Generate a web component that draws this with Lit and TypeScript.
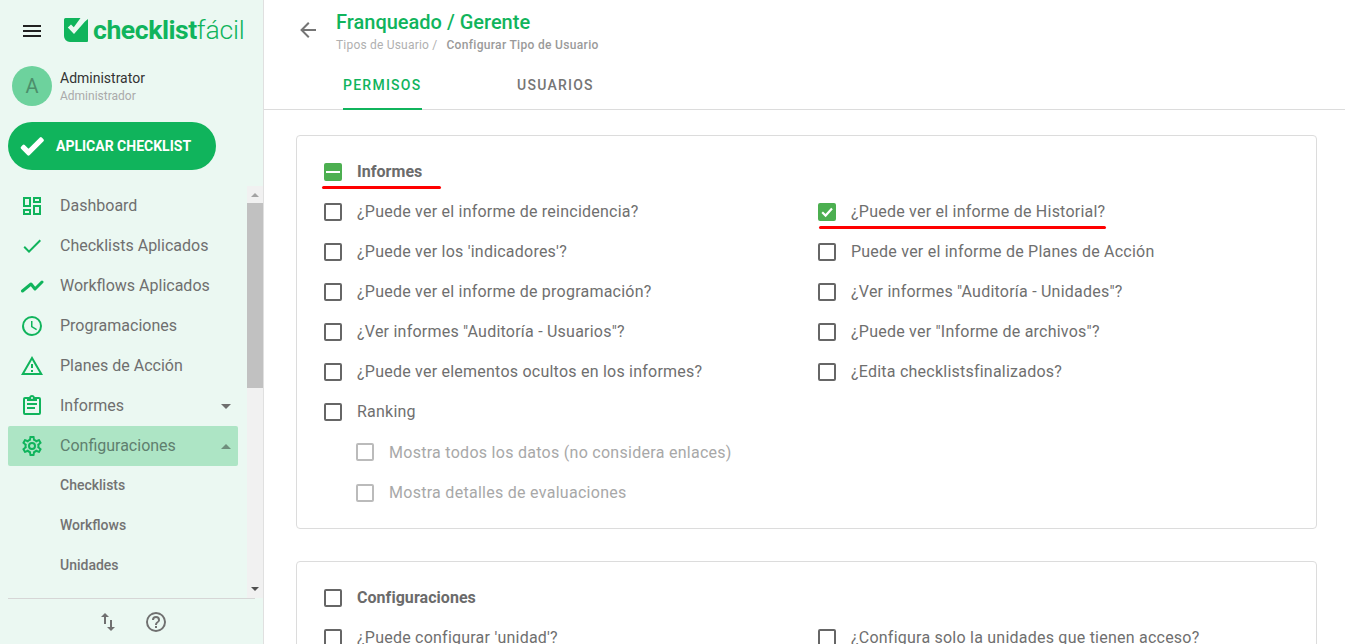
import { LitElement, html, css, svg } from "lit";
import { customElement } from "lit/decorators.js";

const icons: Record<string, string> = {
  dashboard: "M19,5V7H15V5H19M9,5V11H5V5H9M19,13V19H15V13H19M9,17V19H5V17H9M21,3H13V9H21V3M11,3H3V13H11V3M21,11H13V21H21V11M11,15H3V21H11V15Z",
  check: "M21,7L9,19L3.5,13.5L4.91,12.09L9,16.17L19.59,5.59L21,7Z",
  clock: "M12,20A8,8 0 0,0 20,12A8,8 0 0,0 12,4A8,8 0 0,0 4,12A8,8 0 0,0 12,20M12,2A10,10 0 0,1 22,12A10,10 0 0,1 12,22C6.47,22 2,17.5 2,12A10,10 0 0,1 12,2M12.5,7V12.25L17,14.92L16.25,16.15L11,13V7H12.5Z",
  alert: "M12,2L1,21H23M12,6L19.53,19H4.47M11,10V14H13V10M11,16V18H13V16",
  report: "M19,3H14.82C14.4,1.84 13.3,1 12,1C10.7,1 9.6,1.84 9.18,3H5A2,2 0 0,0 3,5V19A2,2 0 0,0 5,21H19A2,2 0 0,0 21,19V5A2,2 0 0,0 19,3M12,3A1,1 0 0,1 13,4A1,1 0 0,1 12,5A1,1 0 0,1 11,4A1,1 0 0,1 12,3M7,7H17V5H19V19H5V5H7V7M17,11H7V9H17V11M15,15H7V13H15V15Z",
  cog: "M12,8A4,4 0 0,1 16,12A4,4 0 0,1 12,16A4,4 0 0,1 8,12A4,4 0 0,1 12,8M12,10A2,2 0 0,0 10,12A2,2 0 0,0 12,14A2,2 0 0,0 14,12A2,2 0 0,0 12,10M10,22C9.75,22 9.54,21.82 9.5,21.58L9.13,18.93C8.5,18.68 7.96,18.34 7.44,17.94L4.95,18.95C4.73,19.03 4.46,18.95 4.34,18.73L2.34,15.27C2.21,15.05 2.27,14.78 2.46,14.63L4.57,12.97L4.5,12L4.57,11L2.46,9.37C2.27,9.22 2.21,8.95 2.34,8.73L4.34,5.27C4.46,5.05 4.73,4.96 4.95,5.05L7.44,6.05C7.96,5.66 8.5,5.32 9.13,5.07L9.5,2.42C9.54,2.18 9.75,2 10,2H14C14.25,2 14.46,2.18 14.5,2.42L14.87,5.07C15.5,5.32 16.04,5.66 16.56,6.05L19.05,5.05C19.27,4.96 19.54,5.05 19.66,5.27L21.66,8.73C21.79,8.95 21.73,9.22 21.54,9.37L19.43,11L19.5,12L19.43,13L21.54,14.63C21.73,14.78 21.79,15.05 21.66,15.27L19.66,18.73C19.54,18.95 19.27,19.04 19.05,18.95L16.56,17.95C16.04,18.34 15.5,18.68 14.87,18.93L14.5,21.58C14.46,21.82 14.25,22 14,22H10M11.25,4L10.88,6.61C9.68,6.86 8.62,7.5 7.85,8.39L5.44,7.35L4.69,8.65L6.8,10.2C6.4,11.37 6.4,12.64 6.8,13.8L4.68,15.36L5.43,16.66L7.86,15.62C8.63,16.5 9.68,17.14 10.87,17.38L11.24,20H12.76L13.13,17.39C14.32,17.14 15.37,16.5 16.14,15.62L18.57,16.66L19.32,15.36L17.2,13.81C17.6,12.64 17.6,11.37 17.2,10.2L19.31,8.65L18.56,7.35L16.15,8.39C15.38,7.5 14.32,6.86 13.12,6.62L12.75,4H11.25Z",
  help: "M11,18H13V16H11V18M12,2A10,10 0 0,0 2,12A10,10 0 0,0 12,22A10,10 0 0,0 22,12A10,10 0 0,0 12,2M12,20C7.59,20 4,16.41 4,12C4,7.59 7.59,4 12,4C16.41,4 20,7.59 20,12C20,16.41 16.41,20 12,20M12,6A4,4 0 0,0 8,10H10A2,2 0 0,1 12,8A2,2 0 0,1 14,10C14,12 11,11.75 11,15H13C13,12.75 16,12.5 16,10A4,4 0 0,0 12,6Z",
  swap: "M9,3L5,7H8V14H10V7H13M16,17V10H14V17H11L15,21L19,17H16Z",
  back: "M20,11V13H8L13.5,18.5L12.08,19.92L4.16,12L12.08,4.08L13.5,5.5L8,11H20Z",
  menu: "M3,6H21V8H3V6M3,11H21V13H3V11M3,16H21V18H3V16Z",
  trend: "M2.5 17 L11 10 L15 15 L22 8",
};

function icon(name: string, cls = "") {
  return html`<svg class="ic ${cls}" viewBox="0 0 24 24">${svg`<path d=${icons[name]}></path>`}</svg>`;
}

const navItems = [
  { label: "Dashboard", ic: "dashboard" },
  { label: "Checklists Aplicados", ic: "check" },
  { label: "Workflows Aplicados", ic: "trend" },
  { label: "Programaciones", ic: "clock" },
  { label: "Planes de Acción", ic: "alert" },
  { label: "Informes", ic: "report", caret: "down" },
  { label: "Configuraciones", ic: "cog", caret: "up", active: true },
];

const subItems = ["Checklists", "Workflows", "Unidades"];

const leftCol = [
  "¿Puede ver el informe de reincidencia?",
  "¿Puede ver los 'indicadores'?",
  "¿Puede ver el informe de programación?",
  '¿Ver informes "Auditoría - Usuarios"?',
  "¿Puede ver elementos ocultos en los informes?",
  "Ranking",
];

const rightCol = [
  "¿Puede ver el informe de Historial?",
  "Puede ver el informe de Planes de Acción",
  '¿Ver informes "Auditoría - Unidades"?',
  '¿Puede ver "Informe de archivos"?',
  "¿Edita checklistsfinalizados?",
];

@customElement("app-root")
export class AppRoot extends LitElement {
  static styles = css`
    :host {
      display: flex;
      width: 1345px;
      height: 644px;
      overflow: hidden;
      background: #fff;
      font-family: Roboto, "Liberation Sans", sans-serif;
      color: #6f6f6f;
    }
    .ic {
      width: 24px;
      height: 24px;
      fill: currentColor;
      flex: none;
      display: block;
    }
    .ic.line {
      fill: none;
      stroke: currentColor;
      stroke-width: 3px;
      stroke-linecap: round;
      stroke-linejoin: round;
    }

    /* sidebar */
    .sidebar {
      width: 264px;
      height: 644px;
      flex: none;
      box-sizing: border-box;
      border-right: 1px solid #e0e0e0;
      background: #ebf8f2;
      display: flex;
      flex-direction: column;
    }
    .brand {
      height: 60px;
      display: flex;
      align-items: center;
      padding-left: 20px;
      flex: none;
    }
    .burger {
      color: #212121;
      margin-right: 20px;
      position: relative;
      top: 1px;
    }
    .logo-mark {
      width: 24px;
      height: 24px;
      flex: none;
      margin-right: 5px;
    }
    .logo-text {
      font-size: 26.6px;
      line-height: 32px;
      color: #10b45c;
      font-weight: 700;
      letter-spacing: -0.45px;
      white-space: nowrap;
    }
    .logo-text span {
      font-weight: 300;
      letter-spacing: -0.2px;
    }
    .user {
      display: flex;
      align-items: center;
      gap: 8px;
      height: 40px;
      margin: 6px 0 0 12px;
      flex: none;
    }
    .avatar {
      width: 40px;
      height: 40px;
      border-radius: 50%;
      background: #6dd29d;
      color: #4c8f6b;
      font-size: 20px;
      display: flex;
      align-items: center;
      justify-content: center;
    }
    .user-info {
      padding-top: 2px;
    }
    .user-name {
      font-size: 14px;
      line-height: 18px;
      color: #333;
    }
    .user-role {
      font-size: 12px;
      line-height: 19px;
      color: #aaa;
    }
    .apply {
      width: 208px;
      height: 48px;
      margin: 16px 0 16px 8px;
      border-radius: 24px;
      background: #10b45c;
      color: #fff;
      display: flex;
      align-items: center;
      font-size: 14px;
      font-weight: 700;
      flex: none;
      box-sizing: border-box;
      padding-left: 10px;
    }
    .apply .ic {
      width: 28px;
      height: 28px;
      margin-right: 10px;
      stroke: #fff;
      stroke-width: 2.4px;
      stroke-linejoin: round;
    }
    .nav-wrap {
      flex: 1;
      min-height: 0;
      display: flex;
    }
    .nav {
      flex: 1;
      min-width: 0;
      overflow: hidden;
      padding-left: 8px;
    }
    .nav-item {
      width: 230px;
      height: 40px;
      display: flex;
      align-items: center;
      box-sizing: border-box;
      padding: 0 7px 0 12px;
      font-size: 16px;
      border-radius: 2px;
    }
    .nav-item .ic {
      color: #10b45c;
      margin-right: 16px;
    }
    .nav-item.active {
      background: #ade5c5;
    }
    .label {
      padding-bottom: 2px;
    }
    .caret {
      margin-left: auto;
      border-left: 5px solid transparent;
      border-right: 5px solid transparent;
    }
    .caret.down {
      border-top: 5px solid #6f6f6f;
    }
    .caret.up {
      border-bottom: 5px solid #6f8f7d;
    }
    .active .label {
      color: #5f7f6e;
    }
    .sub-item {
      height: 40px;
      display: flex;
      align-items: center;
      box-sizing: border-box;
      padding: 0 0 2px 52px;
      font-size: 14px;
      font-weight: 500;
      color: #737373;
    }
    .track {
      width: 16px;
      flex: none;
      background: #f1f1f1;
      display: flex;
      flex-direction: column;
      align-items: center;
      margin-left: 1px;
    }
    .thumb {
      width: 100%;
      height: 185px;
      background: #c1c1c1;
      margin-top: 1px;
    }
    .arrow-up {
      margin-top: 7px;
      height: 0;
      border-left: 4px solid transparent;
      border-right: 4px solid transparent;
      border-bottom: 4px solid #a3a3a3;
      margin-bottom: 5px;
    }
    .arrow-down {
      margin-top: auto;
      margin-bottom: 7px;
      height: 0;
      border-left: 4px solid transparent;
      border-right: 4px solid transparent;
      border-top: 4px solid #505050;
    }
    .side-foot {
      height: 46px;
      width: 247px;
      flex: none;
      margin-left: 8px;
      box-sizing: border-box;
      border-top: 1px solid #d6d6d6;
      display: flex;
      align-items: center;
      justify-content: center;
      gap: 24px;
      color: #707070;
    }

    /* main */
    .main {
      flex: 1;
      min-width: 0;
      display: flex;
      flex-direction: column;
    }
    .topbar {
      height: 60px;
      flex: none;
      display: flex;
      align-items: flex-start;
      padding-left: 32px;
      box-sizing: border-box;
    }
    .back {
      color: #757575;
      margin: 18px 16px 0 0;
    }
    .title {
      margin-top: 9px;
      font-size: 20px;
      line-height: 26px;
      font-weight: 500;
      color: #10b45c;
    }
    .crumbs {
      display: flex;
      font-size: 12px;
      line-height: 14px;
      color: #b0b0b0;
      margin-top: 3px;
      letter-spacing: 0.2px;
      white-space: pre;
    }
    .crumbs b {
      font-weight: 500;
      color: #9a9a9a;
      margin-left: 9px;
      letter-spacing: 0.32px;
    }
    .tabs {
      height: 50px;
      flex: none;
      box-sizing: border-box;
      border-bottom: 1px solid #dcdcdc;
      padding-left: 79px;
      display: flex;
      gap: 95px;
    }
    .tab {
      height: 50px;
      box-sizing: border-box;
      display: flex;
      align-items: center;
      font-size: 14px;
      font-weight: 500;
      letter-spacing: 1.25px;
      color: #757575;
    }
    .tab.on {
      color: #10b45c;
      min-width: 79px;
      border-bottom: 2px solid #10b45c;
      padding-top: 2px;
    }
    .content {
      flex: 1;
      min-height: 0;
      overflow: hidden;
      padding: 25px 28px 0 32px;
    }
    .card {
      position: relative;
      border: 1px solid #dcdcdc;
      border-radius: 4px;
      padding: 16px 27px 15px;
      margin-bottom: 32px;
    }
    .row {
      height: 40px;
      display: flex;
      align-items: center;
      font-size: 16px;
      letter-spacing: 0.23px;
      white-space: nowrap;
    }
    .row .txt {
      padding-bottom: 2px;
    }
    .row.head {
      font-weight: 700;
      letter-spacing: 0.05px;
      color: #6b6b6b;
    }
    .row.sub {
      padding-left: 32px;
      color: #a8a8a8;
      height: 40.5px;
      letter-spacing: 0.28px;
    }
    .box {
      width: 18px;
      height: 18px;
      box-sizing: border-box;
      border: 2px solid #666;
      border-radius: 2px;
      margin-right: 15px;
      flex: none;
      display: flex;
      align-items: center;
      justify-content: center;
    }
    .sub .box {
      border-color: #bbb;
    }
    .box.fill {
      background: #4caf50;
      border-color: #4caf50;
    }
    .box .dash {
      width: 14px;
      height: 2px;
      background: #fff;
    }
    .box svg {
      width: 14px;
      height: 14px;
      stroke: #fff;
      fill: none;
      stroke-width: 2.2px;
    }
    .cols {
      display: grid;
      grid-template-columns: 494px 1fr;
    }
    .mark {
      position: absolute;
      height: 3px;
      background: #f00;
      border-radius: 2px;
    }
    .mark.a {
      left: 25px;
      top: 49.5px;
      width: 119px;
    }
    .mark.b {
      left: 522px;
      top: 89.5px;
      width: 287px;
    }
  `;

  private renderBox(checked = false) {
    if (checked) {
      return html`<span class="box fill"><svg viewBox="0 0 14 14"><path d="M2.2 7.3 5.6 10.6 12 3.6"></path></svg></span>`;
    }
    return html`<span class="box"></span>`;
  }

  private renderRow(text: string, checked = false) {
    return html`<div class="row">${this.renderBox(checked)}<span class="txt">${text}</span></div>`;
  }

  private renderSidebar() {
    return html`
      <aside class="sidebar">
        <div class="brand">
          <div class="burger">${icon("menu")}</div>
          <svg class="logo-mark" viewBox="0 0 24 24">
            <path fill="#10b45c" d="M1.5 0H16.5L9.8 9.2 7 6.4 3.8 9.6 10 16 21 3.4 24 1V23A1 1 0 0 1 23 24H6A6 6 0 0 1 0 18V1.5A1.5 1.5 0 0 1 1.5 0Z"></path>
          </svg>
          <div class="logo-text">checklist<span>fácil</span></div>
        </div>
        <div class="user">
          <div class="avatar">A</div>
          <div class="user-info">
            <div class="user-name">Administrator</div>
            <div class="user-role">Administrador</div>
          </div>
        </div>
        <div class="apply">${icon("check")}APLICAR CHECKLIST</div>
        <div class="nav-wrap">
          <nav class="nav">
            ${navItems.map(
              (n) => html`
                <div class="nav-item ${n.active ? "active" : ""}">
                  ${icon(n.ic, n.ic === "trend" ? "line" : "")}
                  <span class="label">${n.label}</span>
                  ${n.caret ? html`<span class="caret ${n.caret}"></span>` : ""}
                </div>
              `
            )}
            ${subItems.map((s) => html`<div class="sub-item">${s}</div>`)}
          </nav>
          <div class="track">
            <div class="arrow-up"></div>
            <div class="thumb"></div>
            <div class="arrow-down"></div>
          </div>
        </div>
        <div class="side-foot">
          ${icon("swap")} ${icon("help")}
        </div>
      </aside>
    `;
  }

  render() {
    return html`
      ${this.renderSidebar()}
      <main class="main">
        <div class="topbar">
          <div class="back">${icon("back")}</div>
          <div>
            <div class="title">Franqueado / Gerente</div>
            <div class="crumbs">Tipos de Usuario /<b>Configurar Tipo de Usuario</b></div>
          </div>
        </div>
        <div class="tabs">
          <div class="tab on">PERMISOS</div>
          <div class="tab">USUARIOS</div>
        </div>
        <div class="content">
          <section class="card">
            <div class="row head">
              <span class="box fill"><span class="dash"></span></span><span class="txt">Informes</span>
            </div>
            <div class="cols">
              <div>${leftCol.map((t) => this.renderRow(t))}</div>
              <div>${rightCol.map((t, i) => this.renderRow(t, i === 0))}</div>
            </div>
            <div class="row sub"><span class="box"></span>Mostra todos los datos (no considera enlaces)</div>
            <div class="row sub"><span class="box"></span>Mostra detalles de evaluaciones</div>
            <div class="mark a"></div>
            <div class="mark b"></div>
          </section>
          <section class="card">
            <div class="row head"><span class="box"></span><span class="txt">Configuraciones</span></div>
            <div class="cols">
              ${this.renderRow("¿Puede configurar 'unidad'?")}
              ${this.renderRow("¿Configura solo la unidades que tienen acceso?")}
            </div>
          </section>
        </div>
      </main>
    `;
  }
}
